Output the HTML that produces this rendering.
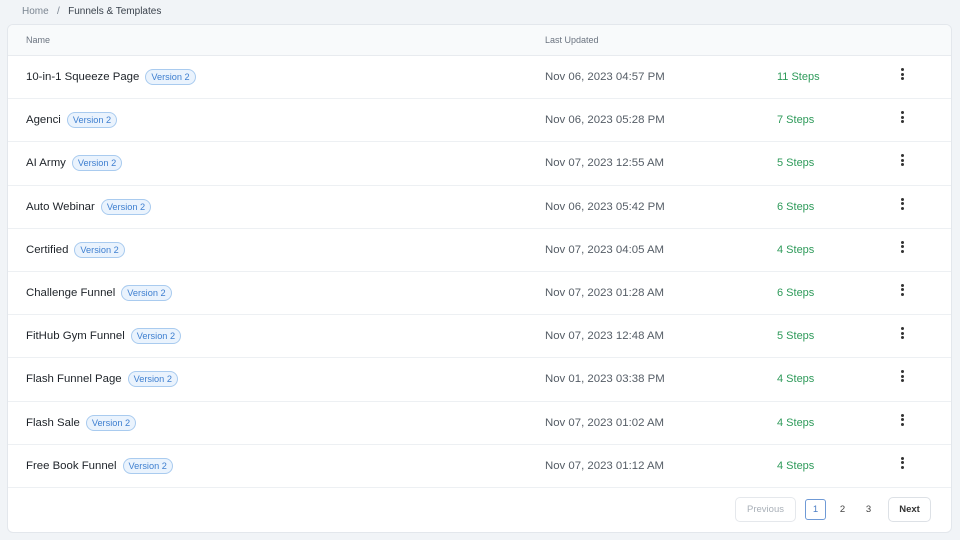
<!DOCTYPE html><html><head><style>
*{box-sizing:border-box;margin:0;padding:0}
body{width:960px;height:540px;background:#f1f4f7;font-family:"Liberation Sans",sans-serif;position:relative;overflow:hidden}
.bc{position:absolute;left:22px;top:6px;font-size:10px;color:#7b8591}
.bc b{font-weight:normal;color:#3a424c}
.card{position:absolute;left:7px;top:24px;width:945px;height:509px;background:#fff;border:1px solid #e3e7ec;border-radius:6px;overflow:hidden}
.hd{height:31px;background:#f8fafb;border-bottom:1px solid #e8ebef;position:relative;font-size:9px;color:#6b7480}
.hd span{position:absolute;top:10px}
.row{height:43.2px;border-bottom:1px solid #edf0f3;position:relative}
.row>*{position:absolute;top:13px;line-height:16px;height:16px}
.nm{left:18px;font-size:11.4px;color:#1e2329;white-space:nowrap;display:flex;align-items:center}
.tag{display:inline-block;margin-left:6px;font-size:9.2px;line-height:12px;color:#3e7fd0;background:#eaf3fd;border:1px solid #a9cbef;border-radius:8px;padding:1px 5px}
.dt{left:537px;font-size:11.4px;color:#555d66}
.st{left:769px;font-size:11px;color:#2e9a5a}
.dots{left:893px;top:12px;width:3px}
.dots i{display:block;width:3px;height:3px;background:#333;border-radius:50%;margin-bottom:1.5px}
.pg{position:absolute;font-size:9.5px;border-radius:5px;text-align:center}
</style></head><body>
<div class="bc">Home &nbsp;&nbsp;/&nbsp;&nbsp; <b>Funnels &amp; Templates</b></div>
<div class="card">
<div class="hd"><span style="left:18px">Name</span><span style="left:537px">Last Updated</span></div>
<div class="row"><span class="nm">10-in-1 Squeeze Page<span class="tag">Version 2</span></span><span class="dt">Nov 06, 2023 04:57 PM</span><span class="st">11 Steps</span><span class="dots"><i></i><i></i><i></i></span></div>
<div class="row"><span class="nm">Agenci<span class="tag">Version 2</span></span><span class="dt">Nov 06, 2023 05:28 PM</span><span class="st">7 Steps</span><span class="dots"><i></i><i></i><i></i></span></div>
<div class="row"><span class="nm">AI Army<span class="tag">Version 2</span></span><span class="dt">Nov 07, 2023 12:55 AM</span><span class="st">5 Steps</span><span class="dots"><i></i><i></i><i></i></span></div>
<div class="row"><span class="nm">Auto Webinar<span class="tag">Version 2</span></span><span class="dt">Nov 06, 2023 05:42 PM</span><span class="st">6 Steps</span><span class="dots"><i></i><i></i><i></i></span></div>
<div class="row"><span class="nm">Certified<span class="tag">Version 2</span></span><span class="dt">Nov 07, 2023 04:05 AM</span><span class="st">4 Steps</span><span class="dots"><i></i><i></i><i></i></span></div>
<div class="row"><span class="nm">Challenge Funnel<span class="tag">Version 2</span></span><span class="dt">Nov 07, 2023 01:28 AM</span><span class="st">6 Steps</span><span class="dots"><i></i><i></i><i></i></span></div>
<div class="row"><span class="nm">FitHub Gym Funnel<span class="tag">Version 2</span></span><span class="dt">Nov 07, 2023 12:48 AM</span><span class="st">5 Steps</span><span class="dots"><i></i><i></i><i></i></span></div>
<div class="row"><span class="nm">Flash Funnel Page<span class="tag">Version 2</span></span><span class="dt">Nov 01, 2023 03:38 PM</span><span class="st">4 Steps</span><span class="dots"><i></i><i></i><i></i></span></div>
<div class="row"><span class="nm">Flash Sale<span class="tag">Version 2</span></span><span class="dt">Nov 07, 2023 01:02 AM</span><span class="st">4 Steps</span><span class="dots"><i></i><i></i><i></i></span></div>
<div class="row"><span class="nm">Free Book Funnel<span class="tag">Version 2</span></span><span class="dt">Nov 07, 2023 01:12 AM</span><span class="st">4 Steps</span><span class="dots"><i></i><i></i><i></i></span></div>
<div class="pg" style="left:727px;top:472px;width:61px;height:25px;line-height:23px;border:1px solid #e5e8ec;color:#a9b0b8">Previous</div>
<div class="pg" style="left:797px;top:474px;width:21px;height:21px;line-height:19px;border:1px solid #6f9ad6;border-radius:3px;color:#4a7cc4">1</div>
<div class="pg" style="left:824px;top:474px;width:21px;height:21px;line-height:21px;color:#444">2</div>
<div class="pg" style="left:850px;top:474px;width:21px;height:21px;line-height:21px;color:#444">3</div>
<div class="pg" style="left:880px;top:472px;width:43px;height:25px;line-height:23px;border:1px solid #dde1e6;color:#333;font-weight:bold">Next</div>
</div>
</body></html>
